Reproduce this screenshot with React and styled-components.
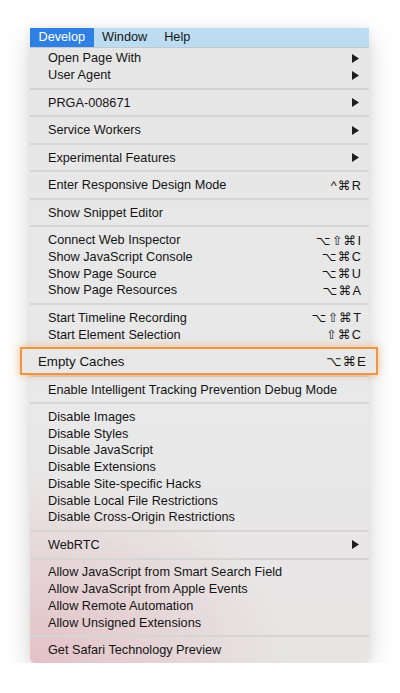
import React from "react";
import styled, { createGlobalStyle } from "styled-components";

const GlobalStyle = createGlobalStyle`
  body {
    margin: 0;
    background: #ffffff;
    font-family: "Liberation Sans", Arial, sans-serif;
  }
`;

const groups = [
  [
    { label: "Open Page With", sub: true },
    { label: "User Agent", sub: true },
  ],
  [{ label: "PRGA-008671", sub: true }],
  [{ label: "Service Workers", sub: true }],
  [{ label: "Experimental Features", sub: true }],
  [{ label: "Enter Responsive Design Mode", keys: "^⌘R" }],
  [{ label: "Show Snippet Editor" }],
  [
    { label: "Connect Web Inspector", keys: "⌥⇧⌘I" },
    { label: "Show JavaScript Console", keys: "⌥⌘C" },
    { label: "Show Page Source", keys: "⌥⌘U" },
    { label: "Show Page Resources", keys: "⌥⌘A" },
  ],
  [
    { label: "Start Timeline Recording", keys: "⌥⇧⌘T" },
    { label: "Start Element Selection", keys: "⇧⌘C" },
  ],
  [{ label: "Empty Caches", keys: "⌥⌘E", callout: true }],
  [{ label: "Enable Intelligent Tracking Prevention Debug Mode" }],
  [
    { label: "Disable Images" },
    { label: "Disable Styles" },
    { label: "Disable JavaScript" },
    { label: "Disable Extensions" },
    { label: "Disable Site-specific Hacks" },
    { label: "Disable Local File Restrictions" },
    { label: "Disable Cross-Origin Restrictions" },
  ],
  [{ label: "WebRTC", sub: true }],
  [
    { label: "Allow JavaScript from Smart Search Field" },
    { label: "Allow JavaScript from Apple Events" },
    { label: "Allow Remote Automation" },
    { label: "Allow Unsigned Extensions" },
  ],
  [{ label: "Get Safari Technology Preview" }],
];

const Page = styled.div`
  display: flex;
  padding: 28px 0 0 30px;
`;

const Panel = styled.div`
  width: 339px;
  border-radius: 0 0 5px 5px;
  background:
    radial-gradient(ellipse 75% 30% at 0% 100%, rgba(226, 182, 188, 0.75), rgba(226, 182, 188, 0) 100%),
    linear-gradient(180deg, #e6e6e6 0%, #e9e9e9 60%, #e7e4e4 100%);
  box-shadow: 0 10px 28px rgba(0, 0, 0, 0.16), 0 0 10px rgba(0, 0, 0, 0.06);
  color: #141414;
  font-size: 12.7px;
`;

const MenuBar = styled.div`
  display: flex;
  height: 18.5px;
  background: #bcdcf2;
  border-bottom: 1px solid #c4c8cc;
`;

const BarItem = styled.div`
  padding: 0 8.5px;
  line-height: 18.5px;
  color: ${(p) => (p.$active ? "#ffffff" : "#141414")};
  background: ${(p) => (p.$active ? "#2f80e4" : "transparent")};
`;

const Group = styled.div`
  position: relative;
  padding: ${(p) => (p.$first ? "2.6px" : "4.4px")} 0 4.4px;
`;

const Separator = styled.div`
  height: 2px;
  background: #d5d5d5;
`;

const Row = styled.div`
  display: flex;
  align-items: center;
  justify-content: space-between;
  height: 16.72px;
  padding: 0 8px 0 18px;
  visibility: ${(p) => (p.$hidden ? "hidden" : "visible")};
`;

const Keys = styled.span`
  font-family: "Liberation Sans", "DejaVu Sans", sans-serif;
  letter-spacing: 1.2px;
  margin-right: -1.2px;
`;

const Callout = styled.div`
  position: absolute;
  top: -2px;
  bottom: 0;
  left: -10px;
  right: -9px;
  display: flex;
  align-items: center;
  justify-content: space-between;
  padding: 0 10px 0 16px;
  background: #e8e8e8;
  border: 2px solid #f0953e;
  box-shadow: 0 0 8px rgba(240, 140, 50, 0.5);
  font-size: 13.3px;
  color: #141414;
`;

const Arrow = () => (
  <svg width="7" height="9" viewBox="0 0 7 9" style={{ marginRight: 2 }}>
    <path d="M0 0 L7 4.5 L0 9 Z" fill="#1d1d1d" />
  </svg>
);

const MenuRow = ({ item }) => (
  <Row $hidden={item.callout}>
    <span>{item.label}</span>
    {item.sub && <Arrow />}
    {item.keys && <Keys>{item.keys}</Keys>}
  </Row>
);

export default function App() {
  return (
    <>
      <GlobalStyle />
      <Page>
        <Panel>
          <MenuBar>
            <BarItem $active>Develop</BarItem>
            <BarItem>Window</BarItem>
            <BarItem>Help</BarItem>
          </MenuBar>
          {groups.map((rows, gi) => (
            <React.Fragment key={gi}>
              {gi > 0 && <Separator />}
              <Group $first={gi === 0}>
                {rows.map((item) => (
                  <MenuRow key={item.label} item={item} />
                ))}
                {rows[0].callout && (
                  <Callout>
                    <span>{rows[0].label}</span>
                    <Keys>{rows[0].keys}</Keys>
                  </Callout>
                )}
              </Group>
            </React.Fragment>
          ))}
        </Panel>
      </Page>
    </>
  );
}
